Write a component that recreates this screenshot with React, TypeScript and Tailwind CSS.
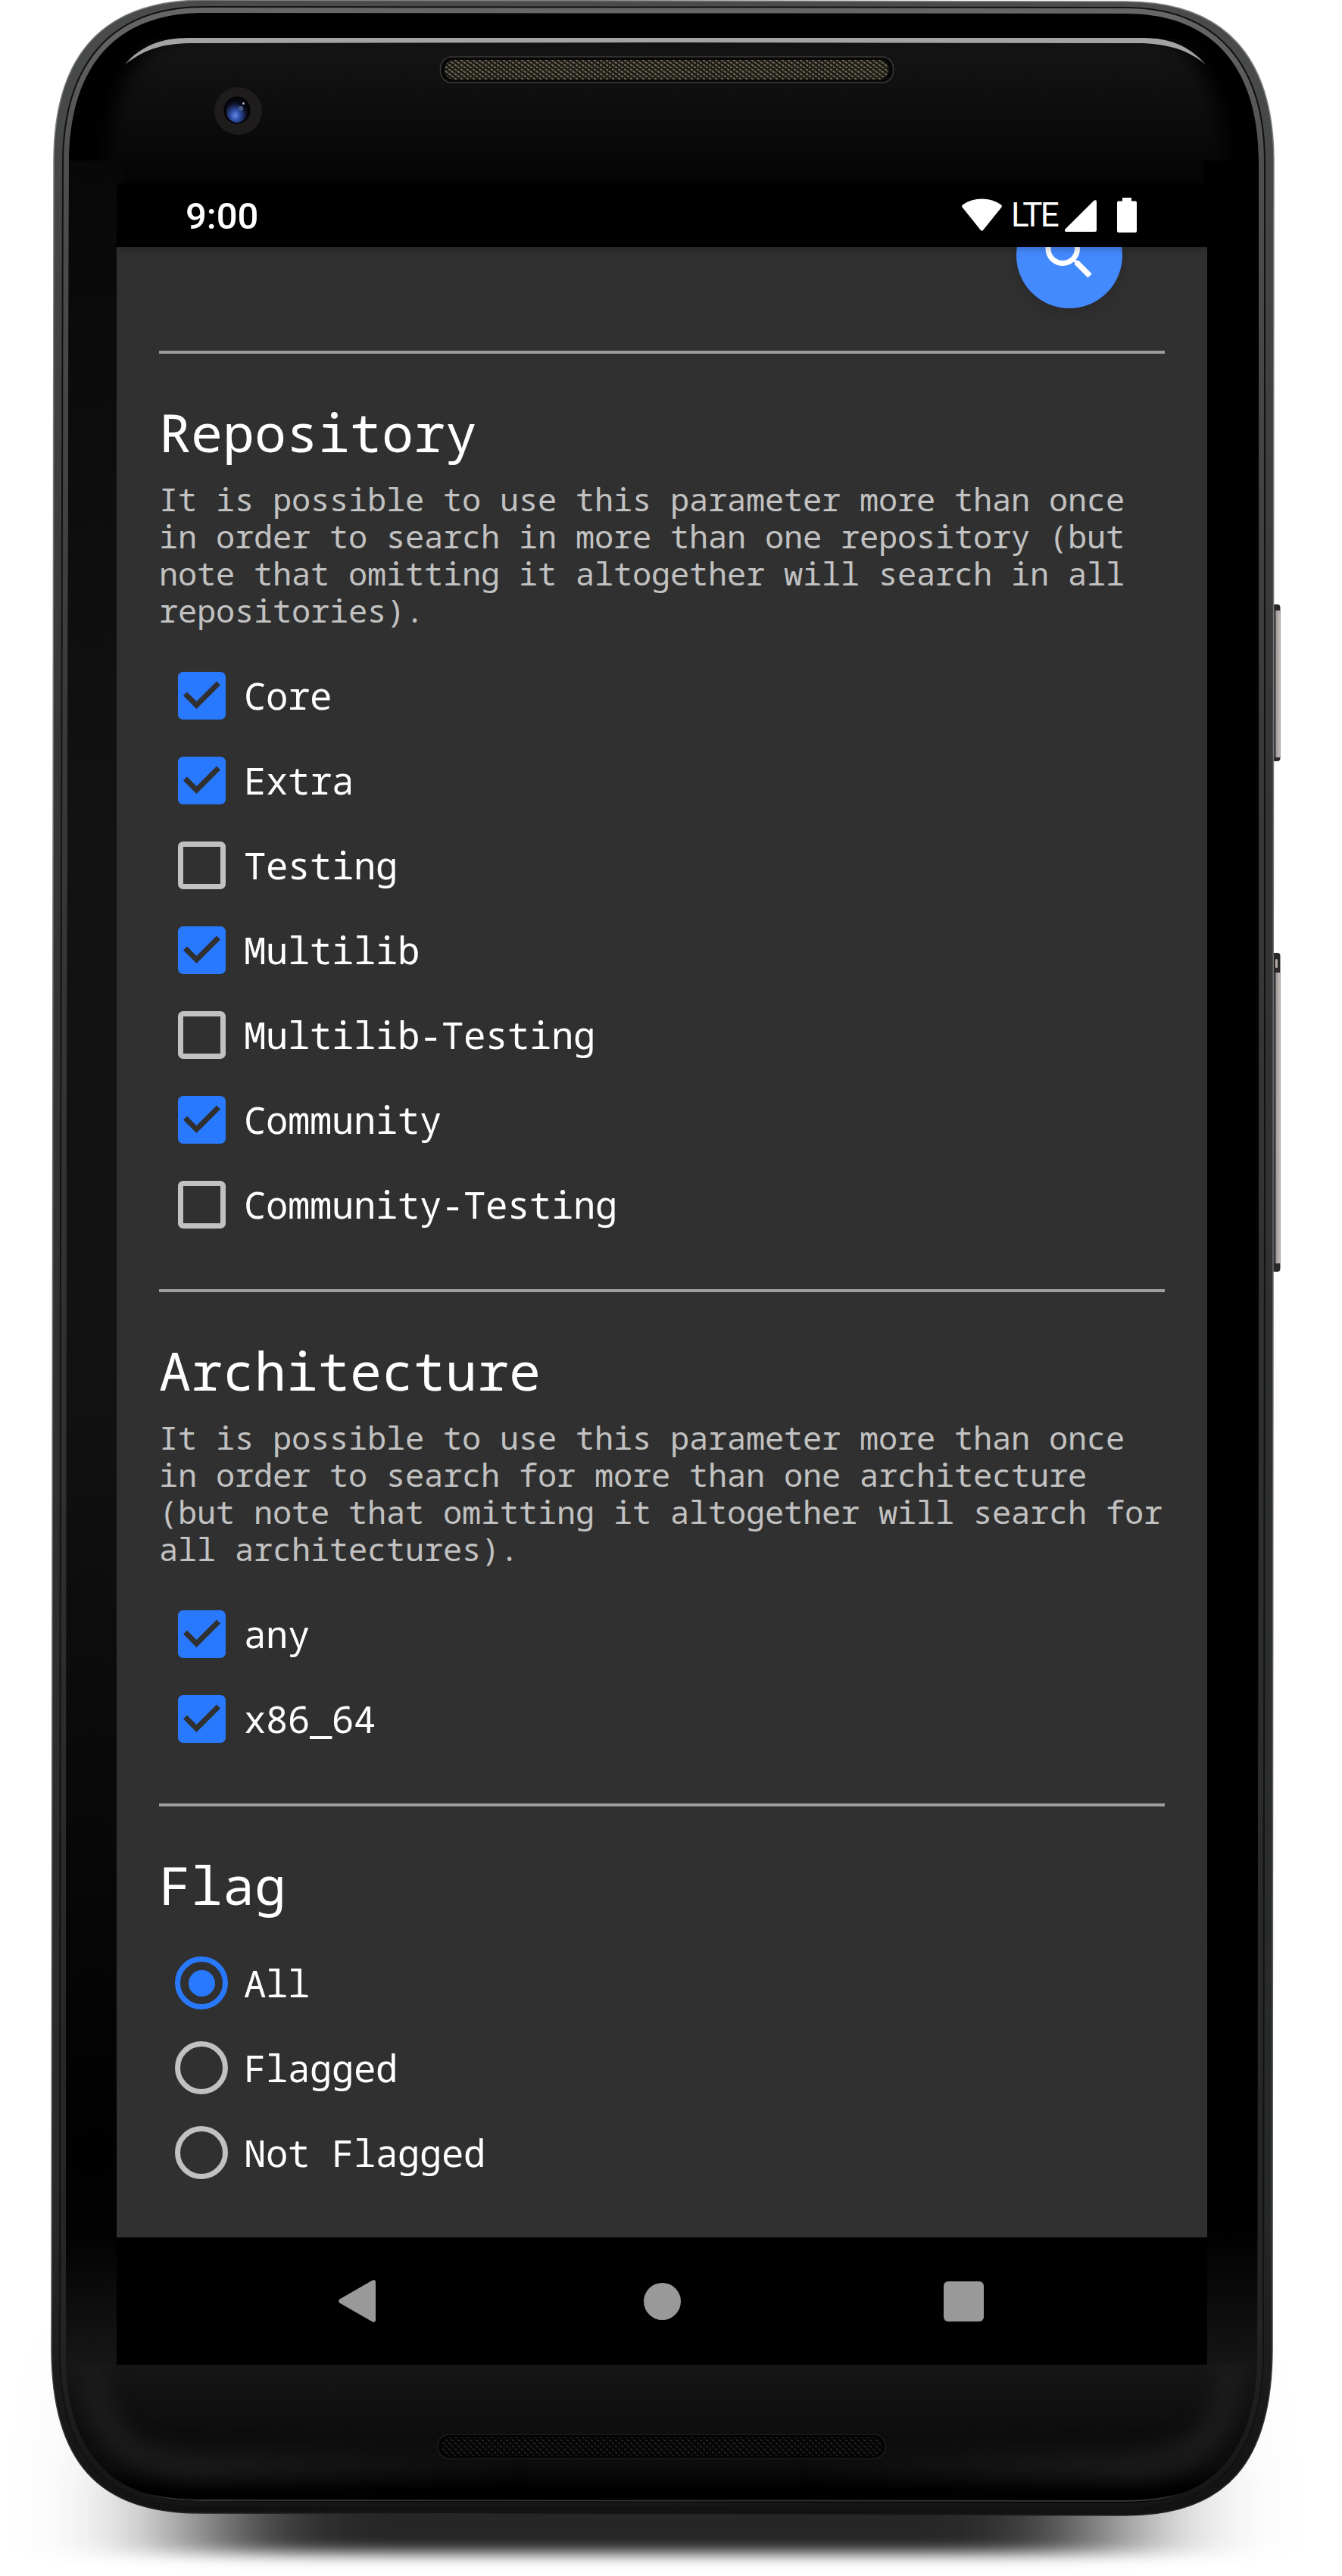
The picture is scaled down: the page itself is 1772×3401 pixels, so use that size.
import React from "react";

const BODY =
  "M71 210 C72 76 132 0 270 0 L1486 2 C1618 2 1681 76 1682 210 L1680 3100 C1680 3250 1620 3321 1486 3321 L264 3318 C130 3318 68 3250 68 3100 Z";
const GLASS =
  "M91 214 C92 92 148 17 270 17 L1486 18 C1604 18 1662 92 1662 214 L1662 1600 L1660 3110 C1658 3240 1600 3303 1486 3304 L264 3302 C148 3302 88 3240 87 3110 L88 1600 Z";

function DeviceFrame() {
  return (
    <svg className="absolute inset-0" width="1772" height="3401" viewBox="0 0 1772 3401" aria-hidden="true">
      <defs>
        <linearGradient id="rim" x1="0" y1="0" x2="0" y2="1">
          <stop offset="0" stopColor="#4a4c4b" />
          <stop offset="0.3" stopColor="#353737" />
          <stop offset="0.88" stopColor="#272828" />
          <stop offset="0.96" stopColor="#181818" />
          <stop offset="1" stopColor="#121212" />
        </linearGradient>
        <linearGradient id="edge" x1="0" y1="0" x2="0" y2="1">
          <stop offset="0" stopColor="#666" />
          <stop offset="0.06" stopColor="#4e4e4e" />
          <stop offset="0.3" stopColor="#383838" />
          <stop offset="0.93" stopColor="#242424" />
          <stop offset="1" stopColor="#151515" />
        </linearGradient>
        <linearGradient id="outline" x1="0" y1="0" x2="0" y2="1">
          <stop offset="0" stopColor="#808380" />
          <stop offset="0.9" stopColor="#555" />
          <stop offset="1" stopColor="#222" />
        </linearGradient>
        <linearGradient id="top" x1="0" y1="0" x2="0" y2="1">
          <stop offset="0" stopColor="#161616" />
          <stop offset="0.5" stopColor="#0a0a0a" />
          <stop offset="0.7" stopColor="#050505" />
          <stop offset="1" stopColor="#030303" />
        </linearGradient>
        <linearGradient id="left" x1="0" y1="0" x2="0" y2="1">
          <stop offset="0" stopColor="#080808" />
          <stop offset="0.3" stopColor="#121212" />
          <stop offset="0.55" stopColor="#121212" />
          <stop offset="0.9" stopColor="#010101" />
          <stop offset="0.94" stopColor="#020202" />
          <stop offset="1" stopColor="#171717" />
        </linearGradient>
        <linearGradient id="right" x1="0" y1="0" x2="0" y2="1">
          <stop offset="0" stopColor="#000" />
          <stop offset="0.94" stopColor="#010101" />
          <stop offset="1" stopColor="#151515" />
        </linearGradient>
        <linearGradient id="bottom" x1="0" y1="0" x2="0" y2="1">
          <stop offset="0" stopColor="#161616" />
          <stop offset="0.5" stopColor="#0d0d0d" />
          <stop offset="0.72" stopColor="#0c0c0c" />
          <stop offset="0.9" stopColor="#000" />
          <stop offset="1" stopColor="#000" />
        </linearGradient>
        <linearGradient id="glow" gradientUnits="userSpaceOnUse" x1="90" y1="0" x2="1660" y2="0">
          <stop offset="0" stopColor="#1b1b1b" />
          <stop offset="0.1" stopColor="#1a1a1a" />
          <stop offset="0.38" stopColor="#1a1a1a" stopOpacity="0" />
          <stop offset="0.62" stopColor="#1a1a1a" stopOpacity="0" />
          <stop offset="0.9" stopColor="#1a1a1a" />
          <stop offset="1" stopColor="#1b1b1b" />
        </linearGradient>
        <linearGradient id="shade" x1="0" y1="0" x2="0" y2="1">
          <stop offset="0" stopColor="#262626" stopOpacity="0" />
          <stop offset="0.75" stopColor="#262626" />
          <stop offset="1" stopColor="#262626" />
        </linearGradient>
        <linearGradient id="key" x1="0" y1="0" x2="1" y2="0">
          <stop offset="0" stopColor="#1d1b1d" />
          <stop offset="0.4" stopColor="#4a464a" />
          <stop offset="0.5" stopColor="#a29c9c" />
          <stop offset="1" stopColor="#c4bcb8" />
        </linearGradient>
        <radialGradient id="lens" cx="0.42" cy="0.7" r="0.6">
          <stop offset="0" stopColor="#6088e8" />
          <stop offset="0.35" stopColor="#3050a8" />
          <stop offset="0.8" stopColor="#10142c" />
          <stop offset="1" stopColor="#05060c" />
        </radialGradient>
        <pattern id="meshTop" width="8" height="6" patternUnits="userSpaceOnUse">
          <rect width="8" height="6" fill="#1f1d18" />
          <path d="M0 1l3 2M4 4l3 2" stroke="#79735f" strokeWidth="1.6" />
        </pattern>
        <pattern id="meshBottom" width="8" height="8" patternUnits="userSpaceOnUse">
          <rect width="8" height="8" fill="#050505" />
          <path d="M0 1l3 2M4 5l3 2" stroke="#33322e" strokeWidth="1.3" />
        </pattern>
        <clipPath id="glassClip">
          <path d={GLASS} />
        </clipPath>
        <clipPath id="chinClip">
          <rect x="80" y="3122" width="1600" height="190" />
        </clipPath>
        <clipPath id="foreheadClip">
          <rect x="80" y="52" width="1600" height="160" />
        </clipPath>
        <filter
          id="shadowBlur"
          filterUnits="userSpaceOnUse"
          x="-200"
          y="2900"
          width="2172"
          height="600"
          colorInterpolationFilters="sRGB"
        >
          <feGaussianBlur stdDeviation="105 10" />
        </filter>
        <filter
          id="soft"
          filterUnits="userSpaceOnUse"
          x="0"
          y="0"
          width="1772"
          height="3401"
          colorInterpolationFilters="sRGB"
        >
          <feGaussianBlur stdDeviation="12" />
        </filter>
      </defs>

      <rect x="262" y="3050" width="1205" height="321" fill="url(#shade)" filter="url(#shadowBlur)" />

      <rect x="1679" y="798" width="11.500" height="207" rx="4" fill="#2a2829" />
      <rect x="1680" y="806" width="10.500" height="194" rx="1.500" fill="url(#key)" />
      <rect x="1679" y="1258" width="11.500" height="421" rx="4" fill="#2a2829" />
      <rect x="1680" y="1284" width="10.500" height="384" rx="1.500" fill="url(#key)" />
      <rect x="1684" y="1266" width="3" height="12" rx="1.500" fill="#b8aeaa" />

      <path d={BODY} fill="url(#rim)" />
      <path d={BODY} fill="none" stroke="url(#outline)" strokeWidth="1.500" />
      <path d={GLASS} fill="none" stroke="#111" strokeWidth="18" />
      <path d={GLASS} fill="none" stroke="url(#edge)" strokeWidth="14" />
      <path d={GLASS} fill="#000" />

      <g clipPath="url(#glassClip)">
        <g clipPath="url(#foreheadClip)">
          <path
            d="M134 320 C134 140 168 48 250 44 L1508 44 C1590 48 1626 140 1626 320 Z"
            fill="url(#top)"
            filter="url(#soft)"
          />
        </g>
        <rect x="80" y="212" width="1600" height="32" fill="#050505" />
        <rect x="80" y="212" width="80" height="2912" fill="url(#left)" />
        <rect x="1590" y="212" width="80" height="2912" fill="url(#right)" />
        <rect x="80" y="3118" width="1600" height="190" fill="url(#bottom)" />
        <g clipPath="url(#chinClip)">
          <path
            d="M124 3060 L124 3120 C124 3220 175 3254 265 3256 L1485 3256 C1575 3254 1624 3220 1624 3120 L1624 3060"
            fill="none"
            stroke="url(#glow)"
            strokeWidth="38"
            filter="url(#soft)"
          />
        </g>
        <path
          d="M133 3260 C160 3288 200 3300 264 3301 L1486 3302 C1550 3301 1590 3288 1616 3260"
          fill="none"
          stroke="#333"
          strokeWidth="2"
        />
      </g>

      <path
        d="M165 85 C186 61 212 50 250 50 L1508 50 C1546 50 1570 61 1592 85 C1568 65 1540 57 1500 57 L872 56 L250 57 C212 58 190 66 165 85 Z"
        fill="#a4a4a4"
      />

      <rect x="581.500" y="75" width="598" height="34" rx="15" fill="#070707" stroke="#3a3a38" strokeWidth="1.500" />
      <rect x="587" y="79" width="586" height="26" rx="12" fill="url(#meshTop)" />
      <rect x="578" y="3214" width="591" height="32" rx="15" fill="#040404" stroke="#1d1d1d" strokeWidth="1.500" />
      <rect x="583" y="3218" width="581" height="24" rx="11" fill="url(#meshBottom)" />

      <circle cx="314.500" cy="146.500" r="31.500" fill="#1e1c1d" />
      <ellipse cx="313" cy="145.500" rx="17.500" ry="18" fill="#030305" />
      <ellipse cx="313" cy="146" rx="14.500" ry="16" fill="url(#lens)" />
      <circle cx="318" cy="143" r="3" fill="#4c5a8c" />
      <circle cx="321.500" cy="136.500" r="1.500" fill="#c9a3d8" />
    </svg>
  );
}

function StatusBar() {
  return (
    <div className="relative z-10 flex h-[84px] shrink-0 items-center justify-between bg-black pl-[91px] pr-[93px] text-white shadow-[0_3px_10px_rgba(0,0,0,0.25)]">
      <span className="mt-[4px] font-['Roboto'] text-[49px] font-medium leading-[84px]">9:00</span>
      <div className="flex h-full items-center">
        <svg className="-mt-px h-[43px] w-[53px]" viewBox="0 0 53 43" fill="currentColor">
          <path d="M1 8.500 C15 -2.300 38 -2.300 52 8.500 Q53.500 10 52.500 11.500 L28 42 Q26.500 43.500 25 42 L0.500 11.500 Q-0.500 10 1 8.500Z" />
        </svg>
        <span className="ml-[12px] w-[71px] whitespace-nowrap font-['Roboto'] text-[44px] leading-[84px] tracking-[-2.6px]">LTE</span>
        <svg className="mt-0.5 h-[42px] w-[42px]" viewBox="0 0 42 42" fill="currentColor">
          <path d="M38.500 0.800 Q42 -1 42 2.500 V40 Q42 42 40 42 H2 Q-1 42 0.500 38.500Z" />
        </svg>
        <svg className="ml-[27px] h-[46px] w-[26px]" viewBox="0 0 26 46" fill="currentColor">
          <path d="M7 0H19V4.500H24Q26 4.500 26 6.500V44Q26 46 24 46H2Q0 46 0 44V6.500Q0 4.500 2 4.500H7Z" />
        </svg>
      </div>
    </div>
  );
}

function Heading({ children }: { children: React.ReactNode }) {
  return <h2 className="mt-[56px] h-[94px] whitespace-nowrap text-[70px] leading-[94px] text-white">{children}</h2>;
}

function Description({ children }: { children: React.ReactNode }) {
  return <p className="mt-[17px] h-[196px] text-[42px] leading-[49px] tracking-[-0.2px] text-[#c1c1c1]">{children}</p>;
}

function CheckRow({ label, checked }: { label: string; checked: boolean }) {
  return (
    <label className="flex h-[112px] items-center pl-[24.5px]">
      <svg className="h-[63px] w-[63px]" viewBox="0 0 18 18">
        {checked ? (
          <path
            fill="#2979ff"
            d="M16 0H2C.9 0 0 .9 0 2v14c0 1.100.9 2 2 2h14c1.100 0 2-.9 2-2V2c0-1.100-.9-2-2-2zM7 14L2 9l1.410-1.410L7 11.170l7.590-7.590L16 5l-9 9z"
          />
        ) : (
          <path fill="#c1c1c1" d="M16 2v14H2V2h14m0-2H2C.9 0 0 .9 0 2v14c0 1.100.9 2 2 2h14c1.100 0 2-.9 2-2V2c0-1.100-.9-2-2-2z" />
        )}
      </svg>
      <span className="ml-[24.5px] whitespace-nowrap text-[49px] leading-[60px] tracking-[-0.4px] text-white">{label}</span>
    </label>
  );
}

function RadioRow({ label, checked }: { label: string; checked: boolean }) {
  return (
    <label className="flex h-[112px] items-center pl-[21px]">
      <span
        className={
          checked
            ? "flex h-[70px] w-[70px] items-center justify-center rounded-full border-[7px] border-[#2979ff]"
            : "flex h-[70px] w-[70px] items-center justify-center rounded-full border-[7px] border-[#c1c1c1]"
        }
      >
        {checked && <span className="h-[35px] w-[35px] rounded-full bg-[#2979ff]" />}
      </span>
      <span className="ml-[21px] whitespace-nowrap text-[49px] leading-[60px] tracking-[-0.4px] text-white">{label}</span>
    </label>
  );
}

function Divider() {
  return <div className="h-1 w-full shrink-0 bg-[#9e9c9e]" />;
}

const repositories = [
  { label: "Core", checked: true },
  { label: "Extra", checked: true },
  { label: "Testing", checked: false },
  { label: "Multilib", checked: true },
  { label: "Multilib-Testing", checked: false },
  { label: "Community", checked: true },
  { label: "Community-Testing", checked: false },
];

const architectures = [
  { label: "any", checked: true },
  { label: "x86_64", checked: true },
];

const flags = [
  { label: "All", checked: true },
  { label: "Flagged", checked: false },
  { label: "Not Flagged", checked: false },
];

export default function App() {
  return (
    <div className="relative h-[3401px] w-[1772px] overflow-hidden bg-white pl-[154px] pt-[242px]">
      <DeviceFrame />
      <main className="relative flex h-[2880px] w-[1440px] flex-col overflow-hidden bg-[#303030]">
        <StatusBar />
        <div className="flex grow flex-col px-[56px] font-['Noto_Sans_Mono','DejaVu_Sans_Mono',monospace]">
          <div className="flex h-[137px] shrink-0 justify-end pr-[56px]">
            <button className="-mt-[59px] flex h-[140px] w-[140px] items-center justify-center rounded-full bg-[#448aff] shadow-[0_8px_20px_rgba(0,0,0,0.13)]">
              <svg className="h-[84px] w-[84px]" viewBox="0 0 24 24" fill="#fff">
                <path d="M15.500 14h-.79l-.28-.27C15.410 12.590 16 11.110 16 9.500 16 5.910 13.090 3 9.500 3S3 5.910 3 9.500 5.910 16 9.500 16c1.610 0 3.090-.59 4.230-1.570l.27.28v.79l5 4.990L20.490 19l-4.990-5zm-6 0C7.010 14 5 11.990 5 9.500S7.010 5 9.500 5 14 7.010 14 9.500 11.990 14 9.500 14z" />
              </svg>
            </button>
          </div>

          <Divider />
          <section className="flex h-[1235px] shrink-0 flex-col">
            <Heading>Repository</Heading>
            <Description>
              It is possible to use this parameter more than once in order to search in more than one repository (but note that
              omitting it altogether will search in all repositories).
            </Description>
            <div className="mt-[32px]">
              {repositories.map((item) => (
                <CheckRow key={item.label} {...item} />
              ))}
            </div>
          </section>

          <Divider />
          <section className="flex h-[675px] shrink-0 flex-col">
            <Heading>Architecture</Heading>
            <Description>
              It is possible to use this parameter more than once in order to search for more than one architecture (but note
              that omitting it altogether will search for all architectures).
            </Description>
            <div className="mt-[32px]">
              {architectures.map((item) => (
                <CheckRow key={item.label} {...item} />
              ))}
            </div>
          </section>

          <Divider />
          <section className="flex shrink-0 flex-col">
            <Heading>Flag</Heading>
            <div className="mt-[27px]">
              {flags.map((item) => (
                <RadioRow key={item.label} {...item} />
              ))}
            </div>
          </section>
        </div>

        <nav className="flex h-[168px] shrink-0 items-center bg-black pl-[293px] text-[#999]">
          <svg className="h-[56px] w-[49px]" viewBox="0 0 49 56" fill="currentColor">
            <path d="M1.500 25.500 L44.500 0.700 Q49 -1 49 3.500 V52.500 Q49 57 44.500 55.300 L1.500 30.500 Q-1.500 28 1.500 25.500Z" />
          </svg>
          <span className="ml-[354px] h-[49px] w-[49px] rounded-full bg-[#999]" />
          <span className="ml-[346.500px] h-[53px] w-[53px] rounded-[6px] bg-[#999]" />
        </nav>
      </main>
    </div>
  );
}
